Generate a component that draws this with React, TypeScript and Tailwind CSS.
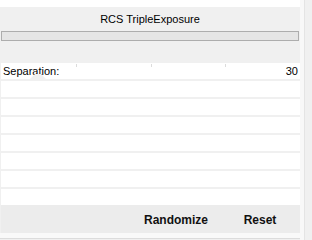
const ROWS = 7;

export default function App() {
  return (
    <div className="w-[312px] h-[240px] overflow-hidden bg-[#f0f0f0] flex font-['Liberation_Sans',Arial,sans-serif] text-black">
      <div className="w-[300px] flex flex-col">
        <div className="h-[7px] bg-white" />
        <div className="pt-[4px] pb-[4px] h-[24px] text-center text-[11px] leading-[16px]">
          RCS TripleExposure
        </div>
        <div className="ml-px w-[298px] h-[10px] border border-[#adadad] bg-[#e5e5e5]" />
        <div className="h-[22px]" />

        <div className="flex flex-col gap-[2px] pl-px">
          <div className="relative h-[16px] bg-white flex items-center justify-between pl-[2px] pr-[2px] text-[11px] leading-[16px]">
            <span>Separation:</span>
            <span>30</span>
            <span className="absolute left-[75px] top-[1px] w-px h-[3px] bg-[#dcdcdc]" />
            <span className="absolute left-[150px] top-[1px] w-px h-[3px] bg-[#dcdcdc]" />
            <span className="absolute left-[224px] top-[1px] w-px h-[3px] bg-[#dcdcdc]" />
            <svg className="absolute left-[29px] top-[11px]" width="16" height="5" viewBox="0 0 16 5">
              <polygon points="5,0 11,0 16,5 0,5" fill="#f0f0f0" />
            </svg>
          </div>
          {Array.from({ length: ROWS }).map((_, i) => (
            <div key={i} className="h-[16px] bg-white" />
          ))}
        </div>

        <div className="ml-px h-[28px] bg-[#ececec] flex justify-end gap-[4px] pt-[5px] text-[12px] font-bold text-[#111]">
          <button className="w-[80px] h-[20px] leading-[20px] text-center">Randomize</button>
          <button className="w-[80px] h-[20px] leading-[20px] text-center">Reset</button>
        </div>
        <div className="h-[5px] bg-[#f9f9f9]" />
        <div className="h-px bg-[#dcdcdc]" />
      </div>
      <div className="w-[4px] bg-[#f8f8f8]" />
      <div className="w-px bg-[#e4e4e4]" />
    </div>
  );
}
